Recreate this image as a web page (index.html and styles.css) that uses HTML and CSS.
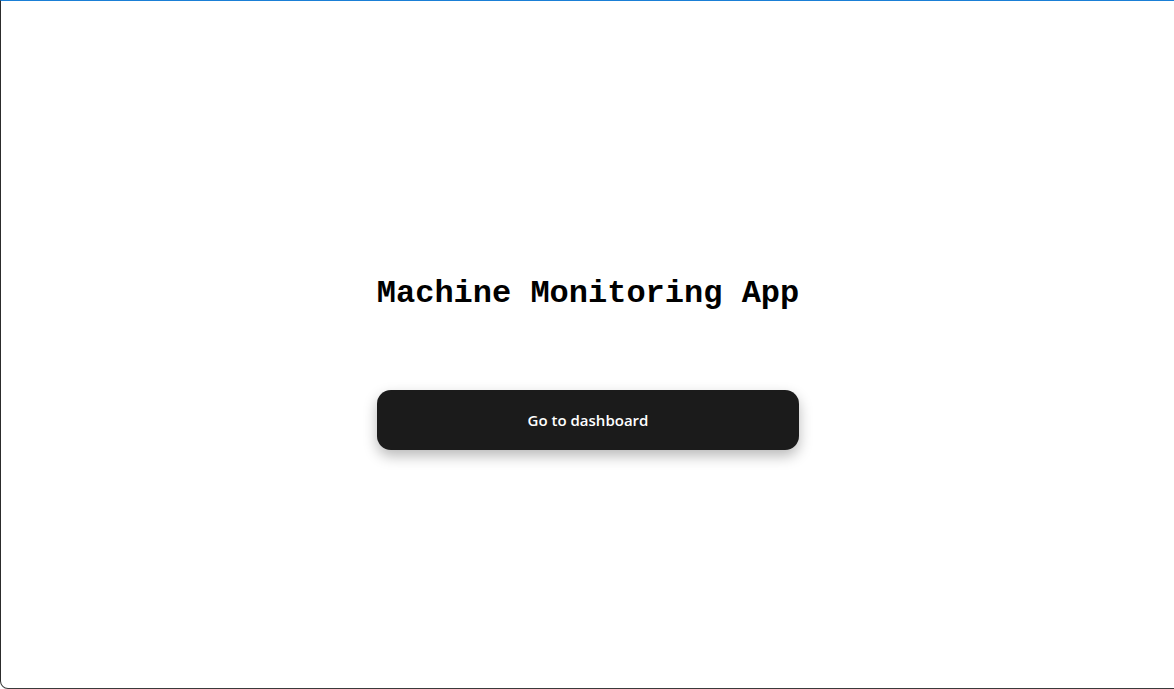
FILE: index.html
```html
<!DOCTYPE html>
<html lang="en">
<head>
<meta charset="utf-8">
<title>Machine Monitoring App</title>
<link rel="stylesheet" href="styles.css">
</head>
<body>
<div class="frame">
  <main class="hero">
    <h1 class="title">Machine Monitoring App</h1>
    <button class="cta" type="button">Go to dashboard</button>
  </main>
</div>
</body>
</html>
```

FILE: styles.css
```css
html, body {
  margin: 0;
  padding: 0;
  background: #ffffff;
}

.frame {
  box-sizing: border-box;
  width: 1174px;
  height: 689px;
  border-top: 1px solid #1a7fd6;
  border-left: 1px solid #2c2c2c;
  border-bottom: 1px solid #3a3a3a;
  border-bottom-left-radius: 8px;
  overflow: hidden;
  background: #ffffff;
}

.hero {
  box-sizing: border-box;
  height: 100%;
  display: flex;
  flex-direction: column;
  align-items: center;
  justify-content: center;
  padding-top: 36px;
  padding-left: 1px;
}

.title {
  margin: 0 0 78px 0;
  font-family: "Liberation Mono", "Courier New", monospace;
  font-weight: bold;
  font-size: 32px;
  line-height: 36px;
  color: #000000;
}

.cta {
  width: 422px;
  height: 60px;
  border: none;
  border-radius: 14px;
  background: #1b1b1b;
  color: #ffffff;
  font-family: "Open Sans", "Noto Sans", sans-serif;
  font-weight: 600;
  font-size: 15px;
  box-shadow: 0 6px 14px rgba(0, 0, 0, 0.28);
  cursor: pointer;
}
```
